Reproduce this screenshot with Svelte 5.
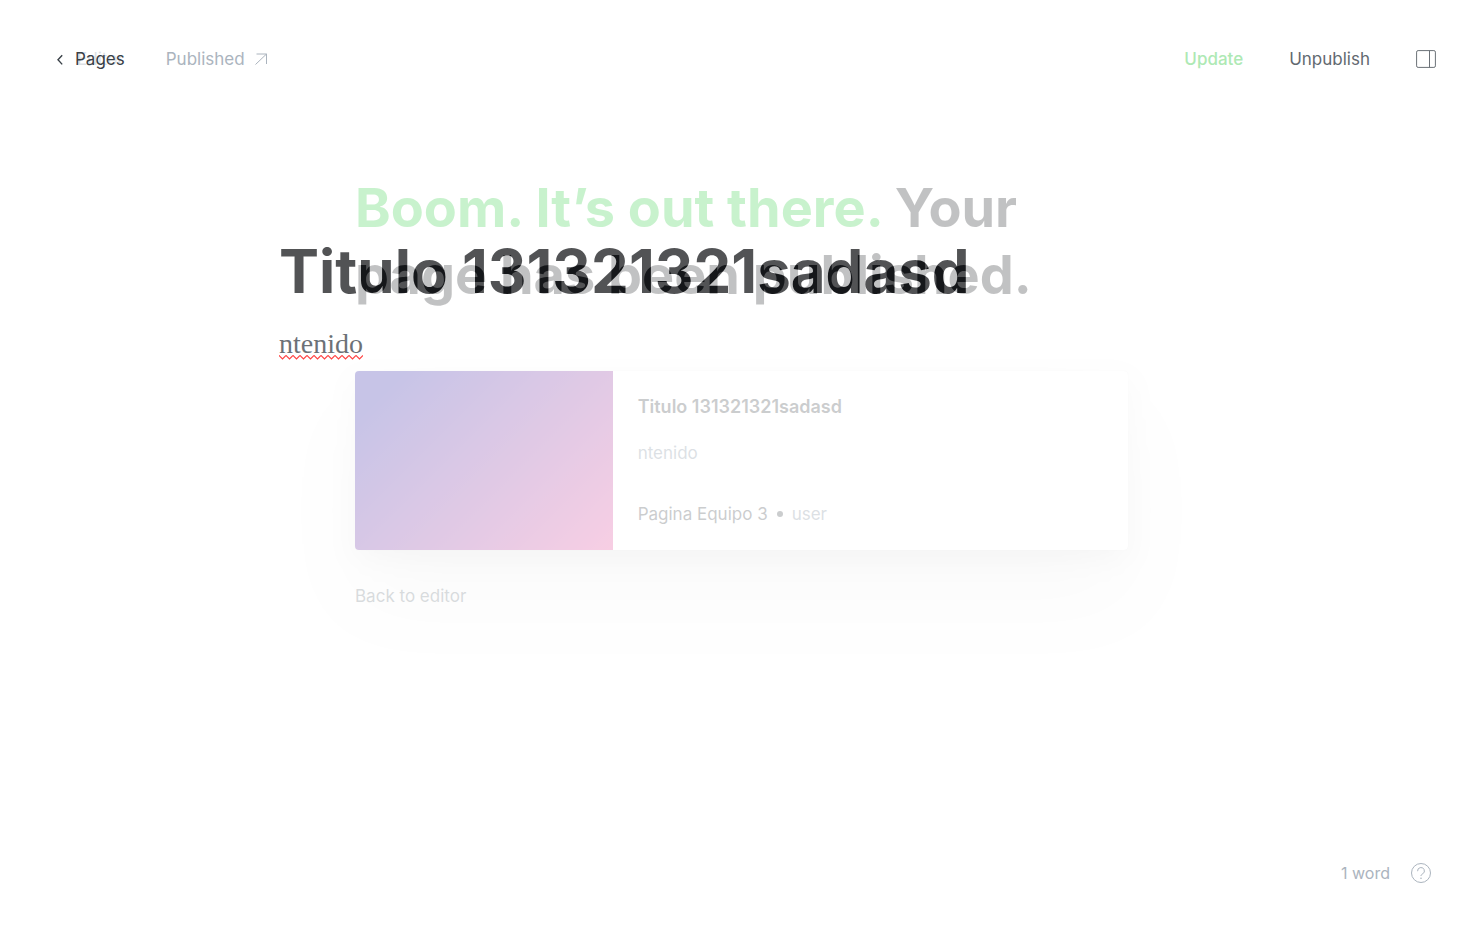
<script>
  let title = $state('Titulo 131321321sadasd');
  const post = {
    title: 'Titulo 131321321sadasd',
    excerpt: 'ntenido',
    site: 'Pagina Equipo 3',
    author: 'user'
  };
</script>

<div class="screen">
  <header class="topbar">
    <nav class="group left" aria-label="Editor">
      <a class="back" href="#pages">
        <svg width="8" height="14" viewBox="0 0 8 14" aria-hidden="true"><path d="M6.200 3.200 2 7.800l4.200 4.600" /></svg>
        Pages
      </a>
      <a class="published" href="#published">
        Published
        <svg width="14" height="14" viewBox="0 0 14 14" aria-hidden="true"><path d="M1.500 12.500 12.500 2M2.500 2h10v10" /></svg>
      </a>
    </nav>
    <div class="group right">
      <button class="update" type="button">Update</button>
      <button class="unpublish" type="button">Unpublish</button>
      <button class="settings" type="button" aria-label="Settings">
        <svg width="20" height="18" viewBox="0 0 20 18" aria-hidden="true"><rect x=".6" y=".6" width="18.800" height="16.800" rx="1.500" /><path d="M13.500 .6v16.800" /></svg>
      </button>
    </div>
  </header>

  <main class="editor">
    <input class="title" aria-label="Page title" bind:value={title} spellcheck="false" />
    <div class="body" role="textbox" tabindex="0" aria-label="Page content" contenteditable="true" spellcheck="false">
      <p><span class="misspelt">ntenido</span></p>
    </div>
  </main>

  <footer class="status">
    <span>1 word</span>
    <a href="#help" aria-label="Help">
      <svg width="22" height="22" viewBox="0 0 22 22" aria-hidden="true"><circle cx="11" cy="11" r="9.500" /><path d="M7.600 9.200a3.400 3.400 0 1 1 5.200 2.600c-1.200.7-1.800 1.100-1.800 2.200" /><circle class="dot" cx="11" cy="16.200" r=".8" /></svg>
    </a>
  </footer>

  <section class="overlay" aria-label="Page published">
    <div class="overlay-bar"><a href="#editor">Editor</a></div>
    <div class="complete">
      <h1><span>Boom. It’s out there.</span> Your page has been published.</h1>
      <article class="card">
        <div class="cover"></div>
        <div class="details">
          <h2>{post.title}</h2>
          <p class="excerpt">{post.excerpt}</p>
          <p class="meta">{post.site}<i></i><span>{post.author}</span></p>
        </div>
      </article>
      <button class="return" type="button">Back to editor</button>
    </div>
  </section>
</div>

<style>
  :global(body) {
    margin: 0;
    background: #fff;
  }
  .screen {
    position: relative;
    display: flex;
    flex-direction: column;
    min-height: 100vh;
    font-family: Inter, sans-serif;
    font-size: 17px;
    line-height: 24px;
    color: #15171a;
  }
  a {
    color: inherit;
    text-decoration: none;
  }
  button {
    padding: 0;
    border: 0;
    background: none;
    font: inherit;
    color: inherit;
    cursor: pointer;
  }
  svg {
    display: block;
    fill: none;
    stroke: currentColor;
  }
  .topbar {
    position: relative;
    z-index: 2;
    display: flex;
    justify-content: space-between;
    padding: 47px 47px 0 56px;
  }
  .group,
  .back,
  .published {
    display: flex;
    align-items: center;
  }
  .left {
    gap: 41px;
  }
  .right {
    gap: 46px;
  }
  .back {
    gap: 11px;
    color: #394047;
  }
  .back svg {
    stroke-width: 1.4;
  }
  .published {
    gap: 9px;
    color: #abb4be;
  }
  .update {
    color: #aee9b4;
    font-weight: 500;
  }
  .unpublish {
    color: #626970;
  }
  .settings {
    color: #6b7177;
  }
  .editor {
    flex: 1;
    box-sizing: border-box;
    width: 100%;
    max-width: 925px;
    margin: 0 auto;
    padding-top: 163px;
  }
  .title {
    display: block;
    width: 100%;
    height: 74px;
    padding: 0;
    border: 0;
    outline: 0;
    background: none;
    font: 700 60px/74px Inter, sans-serif;
    color: #15171a;
  }
  .body {
    outline: 0;
    margin-top: 18px;
    font: 28px/36px "Liberation Serif", serif;
    color: #394047;
  }
  .body p {
    margin: 0;
  }
  .misspelt {
    padding-bottom: 1px;
    background: url("data:image/svg+xml,%3Csvg xmlns='http://www.w3.org/2000/svg' width='7' height='5'%3E%3Cpath d='M-1 .5 0 .5 3.500 4 7 .5' fill='none' stroke='%23f00' stroke-width='1.200'/%3E%3C/svg%3E") left bottom repeat-x;
  }
  .status {
    position: relative;
    z-index: 2;
    display: flex;
    justify-content: flex-end;
    align-items: center;
    gap: 20px;
    padding: 0 51px 46px;
    font-size: 16px;
    color: #abb4be;
  }
  .status .dot {
    fill: currentColor;
    stroke: none;
  }
  .overlay {
    position: absolute;
    inset: 0;
    z-index: 1;
    background: #fff;
    opacity: 0.26;
  }
  .overlay-bar {
    padding: 47px 77px 0;
    color: #7c8b9a;
  }
  .complete {
    max-width: 773px;
    margin: 0 auto;
    padding-top: 103px;
  }
  h1 {
    margin: 0;
    font-size: 54px;
    line-height: 67px;
    font-weight: 700;
  }
  h1 span {
    color: #30cf43;
  }
  .card {
    display: grid;
    grid-template-columns: 1fr 2fr;
    margin-top: 63px;
    border-radius: 4px;
    overflow: hidden;
    background: #fff;
    box-shadow:
      0 0 1px rgba(0, 0, 0, 0.12),
      0 10px 28px rgba(0, 0, 0, 0.08),
      0 50px 80px -10px rgba(0, 0, 0, 0.08);
  }
  .cover {
    background: linear-gradient(135deg, #2c20a6 12%, #e44697);
  }
  .details {
    padding: 24px 25px;
  }
  h2,
  .details p {
    margin: 0;
  }
  h2 {
    font-size: 18px;
    line-height: 24px;
    font-weight: 600;
    color: #394047;
  }
  .details .excerpt {
    margin-top: 22px;
    color: #7c8b9a;
  }
  .details .meta {
    display: flex;
    align-items: center;
    gap: 9px;
    margin-top: 37px;
    color: #394047;
  }
  .meta i {
    width: 6px;
    height: 6px;
    border-radius: 50%;
    background: #394047;
  }
  .meta span {
    color: #7c8b9a;
  }
  .return {
    margin-top: 34px;
    color: #6b7680;
  }
</style>
